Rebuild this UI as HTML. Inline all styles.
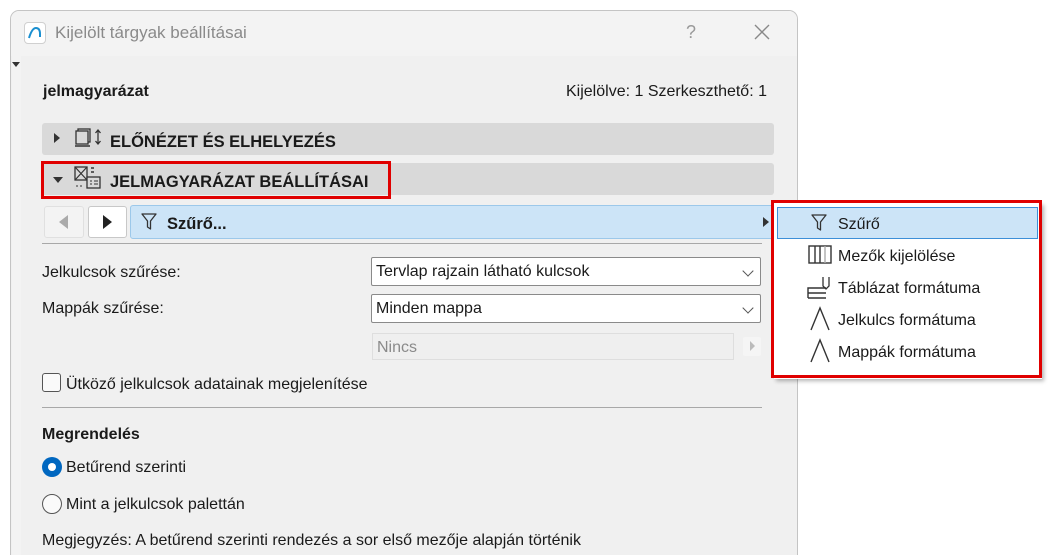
<!DOCTYPE html>
<html><head><meta charset="utf-8"><style>
*{margin:0;padding:0;box-sizing:border-box}
html,body{width:1051px;height:555px;overflow:hidden}
body{background:#fff;position:relative;font-family:"Liberation Sans",sans-serif;font-size:16px;color:#1a1a1a}
.a{position:absolute}
.t{padding-top:2px}
.dlg{left:10px;top:10px;width:788px;height:545px;border:1px solid #c4c4c4;border-bottom:none;border-radius:9px 9px 0 0;background:#f0f0f0;overflow:hidden}
.title{left:0;top:0;width:100%;height:45px;background:#f3f3f3}
.hdr{left:42px;width:732px;height:32px;background:#d9d9d9;border-radius:3px}
.sel{background:#fff;border:1px solid #8a8a8a;border-radius:2px;height:29px;width:390px;left:371px;padding:5px 4px;font-size:16px}
.chev{position:absolute;right:8px;top:9px;width:8px;height:8px;border-right:1.3px solid #555;border-bottom:1.3px solid #555;transform:rotate(45deg)}
.mi{left:838px;font-size:16px;padding-top:2px}
</style></head><body>
<div class="a dlg">
 <div class="a title"></div>
 <div class="a" style="left:1px;top:45px;width:9px;height:500px;background:#f3f3f3"></div>
 <div class="a" style="left:1px;top:51px;width:0;height:0;border-left:4px solid transparent;border-right:4px solid transparent;border-top:5px solid #333"></div>
</div>
<div class="a" style="left:24px;top:22px;width:22px;height:22px;background:#fff;border:1px solid #d0d0d0;border-radius:4px"></div>
<svg class="a" style="left:24px;top:22px" width="22" height="22"><path d="M5 16 Q8 6 12 6 Q16 6 16 12" stroke="#1a8fd0" stroke-width="2" fill="none"/><path d="M16 12 L16 15" stroke="#1a8fd0" stroke-width="2"/></svg>
<div class="a" style="left:55px;top:23px;font-size:17px;color:#8a8a8a">Kijelölt tárgyak beállításai</div>
<div class="a" style="left:686px;top:22px;font-size:18px;color:#999">?</div>
<svg class="a" style="left:754px;top:24px" width="16" height="16"><path d="M1 1L15 15M15 1L1 15" stroke="#888" stroke-width="1.4"/></svg>

<div class="a t" style="left:43px;top:81px;font-weight:bold;font-size:16px">jelmagyarázat</div>
<div class="a t" style="left:566px;top:81px;font-size:16px">Kijelölve: 1 Szerkeszthető: 1</div>

<div class="a hdr" style="top:123px"></div>
<div class="a" style="left:54px;top:133px;border-top:5px solid transparent;border-bottom:5px solid transparent;border-left:6px solid #333"></div>
<svg class="a" style="left:74px;top:127px" width="30" height="24"><rect x="4" y="2" width="12" height="13" fill="none" stroke="#333" stroke-width="1.3"/><rect x="2" y="4" width="12" height="13" fill="#d9d9d9" stroke="#333" stroke-width="1.3"/><path d="M1 19h15" stroke="#333" stroke-width="1.5"/><path d="M24 3v14M21.5 6l2.5-3 2.5 3M21.5 14l2.5 3 2.5-3" stroke="#333" stroke-width="1.3" fill="none"/></svg>
<div class="a t" style="left:110px;top:131px;font-weight:bold;font-size:16.5px">ELŐNÉZET ÉS ELHELYEZÉS</div>

<div class="a hdr" style="top:163px"></div>
<div class="a" style="left:41px;top:161px;width:350px;height:38px;border:3px solid #e00000"></div>
<div class="a" style="left:53px;top:177px;border-left:5px solid transparent;border-right:5px solid transparent;border-top:6px solid #333"></div>
<svg class="a" style="left:74px;top:165px" width="30" height="28"><rect x="1" y="2" width="12" height="13" fill="none" stroke="#333" stroke-width="1.3"/><path d="M1 2l12 13M13 2L1 15" stroke="#333" stroke-width="1.2"/><path d="M17 3h3M17 7h3" stroke="#333" stroke-width="1.5"/><rect x="13" y="12" width="13" height="11" fill="#d9d9d9" stroke="#333" stroke-width="1.3"/><path d="M16 16h2M20 16h4M16 19h2M20 19h4" stroke="#333"/><path d="M2 21h8" stroke="#333" stroke-dasharray="2 2"/></svg>
<div class="a t" style="left:110px;top:171px;font-weight:bold;font-size:16.5px">JELMAGYARÁZAT BEÁLLÍTÁSAI</div>

<div class="a" style="left:44px;top:206px;width:40px;height:32px;background:#f3f3f3;border:1px solid #e0e0e0;border-radius:3px"></div>
<div class="a" style="left:59px;top:215px;border-top:7px solid transparent;border-bottom:7px solid transparent;border-right:9px solid #aaa"></div>
<div class="a" style="left:88px;top:206px;width:39px;height:32px;background:#fff;border:1px solid #c8c8c8;border-radius:3px"></div>
<div class="a" style="left:103px;top:215px;border-top:7px solid transparent;border-bottom:7px solid transparent;border-left:9px solid #222"></div>
<div class="a" style="left:130px;top:205px;width:645px;height:34px;background:#cce4f7;border:1px solid #9cc8ea;border-radius:3px"></div>
<svg class="a" style="left:140px;top:212px" width="18" height="20"><path d="M2 2h14l-5.5 7v8l-3-2V9z" fill="none" stroke="#333" stroke-width="1.3" stroke-linejoin="round"/></svg>
<div class="a t" style="left:167px;top:213px;font-weight:bold;font-size:16.5px">Szűrő...</div>
<div class="a" style="left:763px;top:217px;border-top:5px solid transparent;border-bottom:5px solid transparent;border-left:6px solid #333"></div>
<div class="a" style="left:42px;top:243px;width:720px;height:1px;background:#a8a8a8"></div>

<div class="a t" style="left:42px;top:262px">Jelkulcsok szűrése:</div>
<div class="a t" style="left:42px;top:298px">Mappák szűrése:</div>
<div class="a sel" style="top:257px">Tervlap rajzain látható kulcsok<div class="chev"></div></div>
<div class="a sel" style="top:294px">Minden mappa<div class="chev"></div></div>
<div class="a" style="left:372px;top:333px;width:362px;height:27px;background:#efefef;border:1px solid #dedede;padding:5px 4px;font-size:16px;color:#8a8a8a">Nincs</div>
<div class="a" style="left:743px;top:337px;width:18px;height:19px;background:#f5f5f5;border-radius:2px"></div>
<div class="a" style="left:750px;top:341px;border-top:5px solid transparent;border-bottom:5px solid transparent;border-left:5px solid #bbb"></div>

<div class="a" style="left:42px;top:373px;width:19px;height:19px;border:1px solid #555;border-radius:3px;background:#fafafa"></div>
<div class="a t" style="left:66px;top:374px">Ütköző jelkulcsok adatainak megjelenítése</div>
<div class="a" style="left:42px;top:407px;width:720px;height:1px;background:#a8a8a8"></div>
<div class="a t" style="left:42px;top:424px;font-weight:bold">Megrendelés</div>
<div class="a" style="left:42px;top:457px;width:20px;height:20px;border-radius:50%;background:#0067c0"></div>
<div class="a" style="left:48px;top:463px;width:8px;height:8px;border-radius:50%;background:#fff"></div>
<div class="a t" style="left:66px;top:457px">Betűrend szerinti</div>
<div class="a" style="left:42px;top:494px;width:20px;height:20px;border-radius:50%;border:1px solid #555;background:#fafafa"></div>
<div class="a t" style="left:66px;top:494px">Mint a jelkulcsok palettán</div>
<div class="a t" style="left:42px;top:530px">Megjegyzés: A betűrend szerinti rendezés a sor első mezője alapján történik</div>

<div class="a" style="left:774px;top:203px;width:268px;height:176px;background:#fff;box-shadow:2px 2px 4px rgba(0,0,0,0.3)"></div>
<div class="a" style="left:771px;top:200px;width:271px;height:178px;border:3px solid #e00000"></div>
<div class="a" style="left:777px;top:207px;width:261px;height:32px;background:#cce4f7;border:1px solid #3c8fd8"></div>
<svg class="a" style="left:810px;top:213px" width="18" height="20"><path d="M2 2h14l-5.5 7v8l-3-2V9z" fill="none" stroke="#333" stroke-width="1.3" stroke-linejoin="round"/></svg>
<div class="a mi" style="top:214px">Szűrő</div>
<svg class="a" style="left:807px;top:244px" width="28" height="22"><rect x="2" y="2" width="22" height="17" fill="none" stroke="#333" stroke-width="1.4"/><path d="M8 2v17M13 2v17" stroke="#333" stroke-width="1.4"/><path d="M18 2v17" stroke="#aaa" stroke-width="1.4"/></svg>
<div class="a mi" style="top:246px">Mezők kijelölése</div>
<svg class="a" style="left:806px;top:274px" width="30" height="26"><path d="M2 24V14h18M2 19h18M2 24h18" fill="none" stroke="#333" stroke-width="1.4"/><path d="M17 3v9l3 3 3-3V3" fill="none" stroke="#333" stroke-width="1.3"/></svg>
<div class="a mi" style="top:278px">Táblázat formátuma</div>
<svg class="a" style="left:809px;top:306px" width="22" height="26"><path d="M2 24L11 2l9 22" fill="none" stroke="#333" stroke-width="1.4"/></svg>
<div class="a mi" style="top:310px">Jelkulcs formátuma</div>
<svg class="a" style="left:809px;top:338px" width="22" height="26"><path d="M2 24L11 2l9 22" fill="none" stroke="#333" stroke-width="1.4"/></svg>
<div class="a mi" style="top:342px">Mappák formátuma</div>
</body></html>
